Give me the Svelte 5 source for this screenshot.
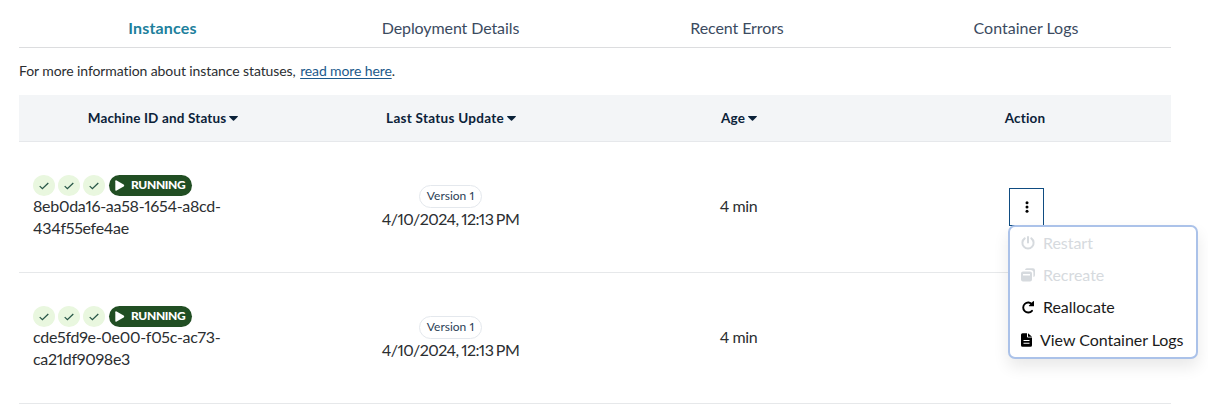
<script>
  const tabs = [
    { label: 'Instances', w: 'instances' },
    { label: 'Deployment Details', w: 'deployment' },
    { label: 'Recent Errors', w: 'errors' },
    { label: 'Container Logs', w: 'logs' }
  ];
  const columns = [
    { label: 'Machine ID and Status', sortable: true },
    { label: 'Last Status Update', sortable: true },
    { label: 'Age', sortable: true },
    { label: 'Action', sortable: false }
  ];
  const rows = [
    { id: ['8eb0da16-aa58-1654-a8cd-', '434f55efe4ae'], open: true },
    { id: ['cde5fd9e-0e00-f05c-ac73-', 'ca21df9098e3'], open: false }
  ];
</script>

<main>
  <nav>
    {#each tabs as tab, i}
      <a class="tab {tab.w}" class:active={i === 0}><span>{tab.label}</span></a>
    {/each}
  </nav>
  <p class="info">For more information about instance statuses, <a class="link">read more here</a>.</p>
  <section class="table">
    <div class="row head">
      {#each columns as col}
        <div class="cell">
          <span>{col.label}</span>
          {#if col.sortable}
            <svg class="caret" width="9" height="5" viewBox="0 0 8 5" preserveAspectRatio="none"><path d="M.6 0h6.8q.9 0 .4.8L4.5 4.6q-.5.5-1 0L.2.8Q-.3 0 .6 0z" fill="currentColor" /></svg>
          {/if}
        </div>
      {/each}
    </div>
    {#each rows as row}
      <div class="row body">
        <div class="cell machine">
          <div class="statuses">
            {#each [0, 1, 2] as n}
              <span class="check"><svg width="10" height="8" viewBox="0 0 10 8"><path d="M.7 4.1 3.4 6.7 9.3 1" fill="none" stroke="#285748" stroke-width="1.3" /></svg></span>
            {/each}
            <span class="running">
              <svg width="10" height="11" viewBox="0 0 10 11"><path d="M.3 1.2Q.3-.2 1.6.5l7 4.1q1.2.9 0 1.8l-7 4.1Q.3 11.2.3 9.8z" fill="#fff" /></svg>
              <b>RUNNING</b>
            </span>
          </div>
          {#each row.id as part}<div class="id">{part}</div>{/each}
        </div>
        <div class="cell update">
          <span class="version">Version 1</span>
          <span class="date">4/10/2024, 12:13 PM</span>
        </div>
        <div class="cell age">4 min</div>
        <div class="cell action">
          {#if row.open}
            <div class="anchor">
              <button class="kebab" aria-label="Actions">
                <svg width="4" height="12" viewBox="0 0 4 12"><circle cx="2" cy="1.7" r="1.5" /><circle cx="2" cy="6" r="1.5" /><circle cx="2" cy="10.3" r="1.5" /></svg>
              </button>
              <div class="menu">
                <div class="item disabled">
                  <svg width="14" height="14" viewBox="0 0 14 14" fill="none" stroke="currentColor" stroke-width="2" stroke-linecap="round"><path d="M7 1v5.6M3.7 2.4a5.6 5.6 0 1 0 6.6 0" /></svg>
                  <span>Restart</span>
                </div>
                <div class="item disabled">
                  <svg width="14" height="14" viewBox="0 0 14 14"><path d="M5.8.3H12q2 0 2 2v4.800q0 2-1.6 2V4.8q0-2.700-2.7-2.7H4Q4.2.3 5.8.3z" fill="currentColor" /><path fill-rule="evenodd" d="M2 3.6h7q2 0 2 2v6q0 2-2 2H2q-2 0-2-2v-6q0-2 2-2zM2 6v1.500h7V6z" fill="currentColor" /></svg>
                  <span>Recreate</span>
                </div>
                <div class="item">
                  <svg width="14" height="14" viewBox="0 0 14 14"><path d="M11.1 4.4A5 5 0 1 0 11 10.8" fill="none" stroke="currentColor" stroke-width="1.9" stroke-linecap="round" /><path d="M12.1 1.2q.9-.6.9.4V5.700q0 .5-.5.5H8.4q-1 0-.4-.8z" fill="currentColor" /></svg>
                  <span>Reallocate</span>
                </div>
                <div class="item logs-item">
                  <svg width="11" height="14" viewBox="0 0 11 14"><path fill-rule="evenodd" d="M1.5.2H6v3.6q0 .8.8.8H11v7.700q0 1.500-1.500 1.500h-8Q0 13.800 0 12.300V1.700Q0 .2 1.500.2zM2.500 7v1h6V7zM2.500 9.700v1h6v-1zM7 .2 11 3.800H7z" fill="currentColor" /></svg>
                  <span>View Container Logs</span>
                </div>
              </div>
            </div>
          {/if}
        </div>
      </div>
    {/each}
  </section>
</main>

<style>
  :global(body) { background: #fff; }
  main {
    box-sizing: border-box;
    width: 1208px;
    height: 409px;
    padding: 10px 37px 0 19px;
    overflow: hidden;
    font-family: Lato, "Noto Sans", sans-serif;
    font-variant-numeric: proportional-nums;
    color: #2b2e31;
  }
  nav { display: grid; grid-template-columns: repeat(4, 1fr); height: 38px; }
  .tab {
    box-sizing: border-box;
    height: 38px;
    border-bottom: 1px solid #dcdddf;
    text-align: center;
    font-size: 16px;
    line-height: 36px;
    letter-spacing: -.1px;
    color: #3b4b5f;
  }
  .tab.active { color: #207f9c; font-weight: 700; letter-spacing: .16px; }
  .deployment, .instances { padding-right: 1px; }
  .logs { padding-right: 2px; letter-spacing: 0; }
  .errors { padding-right: 4px; }
  .info { margin: 0; padding-top: 13px; height: 34px; font-size: 14px; line-height: 20px; letter-spacing: -.095px; white-space: nowrap; }
  .link { margin-left: 1px; letter-spacing: -.12px; color: #1c5a8c; text-decoration: underline; text-underline-offset: 2px; }
  .row { display: grid; grid-template-columns: repeat(4, 288px); box-sizing: border-box; }
  .head { height: 47px; background: #f3f5f7; border-bottom: 1px solid #e6e8eb; color: #0b2239; font-size: 13.5px; letter-spacing: .15px; font-weight: 700; }
  .head .cell { display: flex; align-items: center; justify-content: center; gap: 3px; }
  .head .cell:nth-child(2) { letter-spacing: .27px; }
  .head .cell:last-child { padding-right: 4px; }
  .body { height: 131px; border-bottom: 1px solid #e6e8ea; font-size: 16px; line-height: 22px; }
  .machine { padding: 33px 0 0 14px; }
  .statuses { display: flex; align-items: center; height: 21px; gap: 3px; }
  .check { display: flex; align-items: center; justify-content: center; width: 22px; height: 21px; border-radius: 50%; background: #e9f7df; }
  .running { display: flex; align-items: center; box-sizing: border-box; width: 83px; height: 21px; margin-left: 1px; padding-left: 6px; gap: 6px; border-radius: 11px; background: #214e23; color: #fff; font-size: 12px; line-height: 20px; letter-spacing: -.35px; }
  .running b { font-weight: 900; padding-bottom: 1px; }
  .id { position: relative; top: -1px; white-space: nowrap; letter-spacing: -.3px; }
  .update { display: flex; flex-direction: column; align-items: center; padding: 43px 1px 0 0; }
  .version { box-sizing: border-box; width: 63px; height: 23px; border: 1px solid #e4e8ed; border-radius: 12px; text-align: center; font-size: 12px; line-height: 20px; color: #2c4157; }
  .date { line-height: 21px; letter-spacing: -.56px; word-spacing: -1px; }
  .age { display: flex; align-items: center; justify-content: center; padding: 0 1px 2px 0; letter-spacing: -.4px; }
  .action { padding: 46px 0 0 126px; }
  .anchor { position: relative; width: 35px; height: 38px; }
  .kebab { display: flex; align-items: center; justify-content: center; width: 35px; height: 38px; padding: 0; background: #fff; border: 1px solid #0f4c81; }
  .menu { position: absolute; z-index: 1; top: 37px; left: -1px; box-sizing: border-box; width: 190px; height: 134px; padding: 0 0 0 11px; border: 2px solid #abc2e9; border-radius: 7px; background: #fff; box-shadow: 0 8px 16px rgba(0, 0, 0, .09); color: #1b1b1b; }
  .item { display: flex; align-items: center; height: 32.2px; gap: 8px; white-space: nowrap; }
  .item svg { flex: none; color: #000; }
  .item span { letter-spacing: -.04px; }
  .item.disabled, .item.disabled svg { color: #d6dade; }
</style>
